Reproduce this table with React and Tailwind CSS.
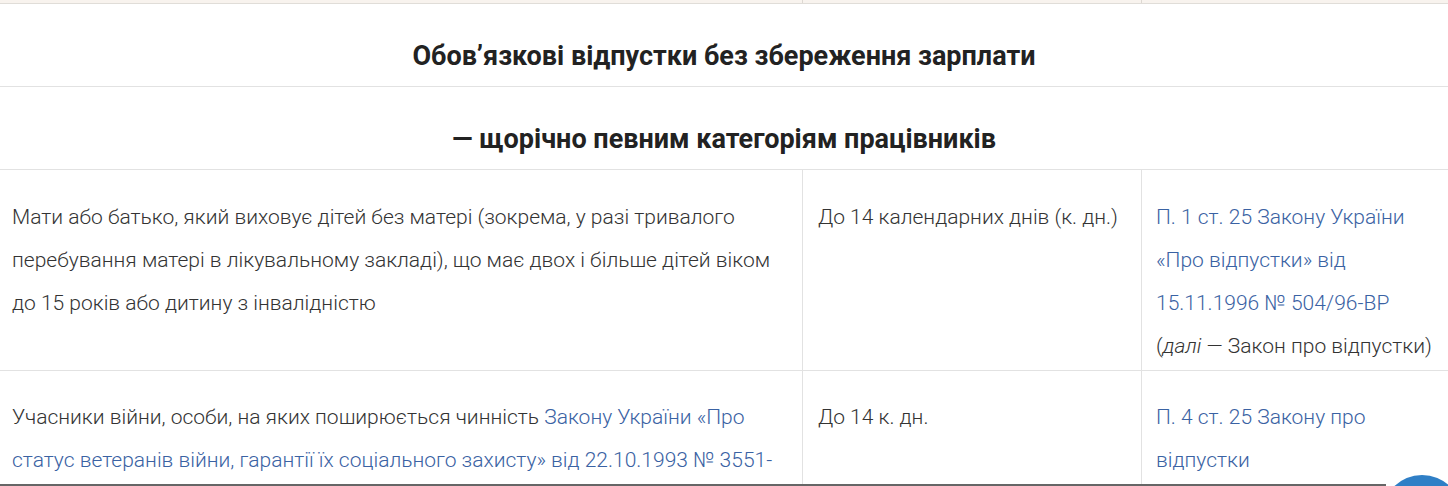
// Leave table fragment — "mandatory unpaid leave" section of an article.
// Three columns: who is entitled, duration, legal basis.

const LINK = "text-[#3a62a3]";

function HeadingRow({ children, className = "" }) {
  return (
    <div
      className={`border-b border-[#e2e2e2] text-center text-[27px] leading-[36px] font-bold text-[#222] ${className}`}
    >
      {children}
    </div>
  );
}

function Row({ who, duration, basis, pad = "" }) {
  return (
    <div className="grid grid-cols-[802px_339px_1fr] border-b border-[#e2e2e2] text-[21px] leading-[43px] font-light text-[#333]">
      <div className={`pl-[12px] pr-[20px] ${pad}`}>{who}</div>
      <div className={`border-l border-[#e2e2e2] pl-[15px] pr-[8px] ${pad}`}>{duration}</div>
      <div className={`border-l border-[#e2e2e2] pl-[14px] pr-[10px] ${pad}`}>{basis}</div>
    </div>
  );
}

export default function App() {
  return (
    <div
      className="relative h-[486px] w-full overflow-hidden bg-white"
      style={{ fontFamily: "Roboto, 'Liberation Sans', sans-serif" }}
    >
      {/* tail of the previous (shaded) row */}
      <div className="grid h-[4px] grid-cols-[802px_339px_1fr] border-b border-[#e0ddd8] bg-[#f8f3ee]">
        <div />
        <div className="border-l border-[#ddd8d2]" />
        <div className="border-l border-[#ddd8d2]" />
      </div>

      <HeadingRow className="pt-[34px] pb-[12px]">
        Обов’язкові відпустки без збереження зарплати
      </HeadingRow>
      <HeadingRow className="pt-[34px] pb-[12px]">
        — щорічно певним категоріям працівників
      </HeadingRow>

      <Row
        pad="pt-[26px] pb-[2px]"
        who="Мати або батько, який виховує дітей без матері (зокрема, у разі тривалого перебування матері в лікувальному закладі), що має двох і більше дітей віком до 15 років або дитину з інвалідністю"
        duration="До 14 календарних днів (к. дн.)"
        basis={
          <>
            <span className={LINK}>
              П. 1 ст. 25 Закону України «Про відпустки» від 15.11.1996 № 504/96-ВР
            </span>
            <br />(<i>далі</i> — Закон про відпустки)
          </>
        }
      />

      <Row
        pad="pt-[25px] pb-[10px]"
        who={
          <>
            Учасники війни, особи, на яких поширюється чинність{" "}
            <span className={LINK}>
              Закону України «Про статус ветеранів війни, гарантії їх соціального
              захисту» від 22.10.1993 № 3551-XII
            </span>
          </>
        }
        duration="До 14 к. дн."
        basis={<span className={LINK}>П. 4 ст. 25 Закону про відпустки</span>}
      />

      {/* bottom bar edge + scroll-to-top button */}
      <div className="absolute left-0 top-[484px] h-[2px] w-[1386px] bg-[#666]" />
      <div className="absolute left-[1382px] top-[475px] h-[80px] w-[80px] rounded-full bg-[#2f7fc6]" />
    </div>
  );
}
